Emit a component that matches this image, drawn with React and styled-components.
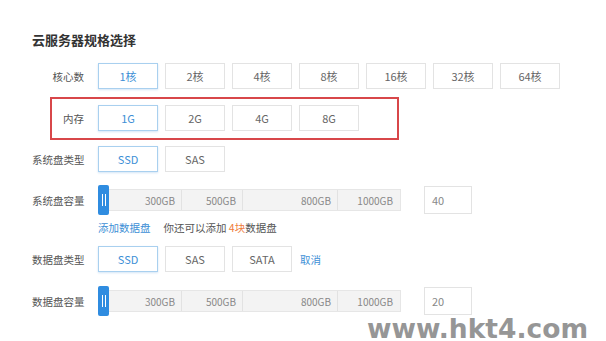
import React from "react";
import styled, { createGlobalStyle } from "styled-components";

const GlobalStyle = createGlobalStyle`
  html, body {
    margin: 0;
    padding: 0;
    background: #fff;
  }
  body {
    font-family: "Noto Sans CJK SC", "Open Sans", sans-serif;
  }
`;

const Page = styled.div`
  position: relative;
  width: 606px;
  height: 341px;
  overflow: hidden;
  background: #fff;
  padding-left: 32px;
  box-sizing: border-box;
`;

const Title = styled.h2`
  margin: 0;
  padding-top: 32px;
  font-size: 13px;
  line-height: 16px;
  font-weight: 700;
  color: #333;
`;

const Row = styled.div`
  position: relative;
  display: flex;
  align-items: center;
  height: ${(p) => p.$height || 26}px;
  margin-top: ${(p) => p.$top}px;

  ${(p) =>
    p.$marked &&
    `
    &::after {
      content: "";
      position: absolute;
      left: 18px;
      width: 349px;
      top: -8px;
      bottom: -9px;
      border: 2px solid #d8474a;
      box-sizing: border-box;
      pointer-events: none;
    }
  `}
`;

const Label = styled.div`
  width: 52px;
  margin-right: 14px;
  text-align: right;
  font-size: 10.5px;
  color: #555;
  white-space: nowrap;
`;

const Options = styled.div`
  display: flex;
  gap: 7px;
  align-items: center;
`;

const Option = styled.div`
  width: 60px;
  height: 26px;
  box-sizing: border-box;
  display: flex;
  align-items: center;
  justify-content: center;
  font-size: 11px;
  color: ${(p) => (p.$active ? "#3d8fd6" : "#666")};
  border: 1px solid ${(p) => (p.$active ? "#a9d0ef" : "#e3e3e3")};
  background: #fff;
  box-shadow: ${(p) => (p.$active ? "0 1px 2px rgba(80,150,220,0.25)" : "none")};
`;

const TextLink = styled.span`
  margin-left: 1px;
  font-size: 10.5px;
  color: #3d8fd6;
`;

const Slider = styled.div`
  display: flex;
  align-items: center;
`;

const Handle = styled.div`
  width: 11px;
  height: 30px;
  border-radius: 2px;
  background: #2f8ce0;
  display: flex;
  align-items: center;
  justify-content: center;
  gap: 2px;
  margin-right: -1px;
  position: relative;
  z-index: 1;

  span {
    width: 1px;
    height: 12px;
    background: #fff;
  }
`;

const Track = styled.div`
  display: flex;
  height: 22px;
  border: 1px solid #e6e6e6;
  border-left: none;
  background: #f3f3f3;
  box-sizing: border-box;
`;

const Segment = styled.div`
  width: ${(p) => p.$w}px;
  box-sizing: border-box;
  display: flex;
  align-items: center;
  justify-content: flex-end;
  padding-right: 6px;
  font-size: 10px;
  color: #888;
  border-right: 1px solid ${(p) => (p.$last ? "transparent" : "#e2e2e2")};
`;

const ValueBox = styled.div`
  margin-left: 23px;
  width: 48px;
  height: 28px;
  box-sizing: border-box;
  border: 1px solid #e3e3e3;
  display: flex;
  align-items: center;
  padding-left: 7px;
  font-size: 11px;
  color: #888;
`;

const Hint = styled.div`
  display: flex;
  align-items: center;
  height: 14px;
  margin-top: 5px;
  padding-left: 66px;
  font-size: 10.5px;
  color: #555;
`;

const HintLink = styled.span`
  color: #3d8fd6;
  margin-right: 13px;
`;

const Accent = styled.span`
  color: #ef7b3a;
`;

const Watermark = styled.div`
  position: absolute;
  left: 367px;
  top: 318px;
  font-family: "DejaVu Sans", sans-serif;
  font-weight: 700;
  font-size: 26.5px;
  line-height: 22px;
  color: #969696;
  white-space: nowrap;
`;

const segments = [
  { w: 74, t: "300GB" },
  { w: 61, t: "500GB" },
  { w: 95, t: "800GB" },
  { w: 62, t: "1000GB" },
];

const CapacitySlider = ({ value }) => (
  <Slider>
    <Handle>
      <span />
      <span />
    </Handle>
    <Track>
      {segments.map((s, i) => (
        <Segment key={s.t} $w={s.w} $last={i === segments.length - 1}>
          {s.t}
        </Segment>
      ))}
    </Track>
    <ValueBox>{value}</ValueBox>
  </Slider>
);

const OptionRow = ({ label, items, top, marked, children }) => (
  <Row $top={top} $marked={marked}>
    <Label>{label}</Label>
    <Options>
      {items.map((it, i) => (
        <Option key={it} $active={i === 0}>
          {it}
        </Option>
      ))}
      {children}
    </Options>
  </Row>
);

export default function App() {
  return (
    <>
      <GlobalStyle />
      <Page>
        <Title>云服务器规格选择</Title>
        <OptionRow
          label="核心数"
          top={15}
          items={["1核", "2核", "4核", "8核", "16核", "32核", "64核"]}
        />
        <OptionRow label="内存" top={16} marked items={["1G", "2G", "4G", "8G"]} />
        <OptionRow label="系统盘类型" top={15} items={["SSD", "SAS"]} />
        <Row $top={13} $height={30}>
          <Label>系统盘容量</Label>
          <CapacitySlider value="40" />
        </Row>
        <Hint>
          <HintLink>添加数据盘</HintLink>
          你还可以添加&nbsp;<Accent>4块</Accent>数据盘
        </Hint>
        <OptionRow label="数据盘类型" top={12} items={["SSD", "SAS", "SATA"]}>
          <TextLink>取消</TextLink>
        </OptionRow>
        <Row $top={14} $height={30}>
          <Label>数据盘容量</Label>
          <CapacitySlider value="20" />
        </Row>
        <Watermark>www.hkt4.com</Watermark>
      </Page>
    </>
  );
}
